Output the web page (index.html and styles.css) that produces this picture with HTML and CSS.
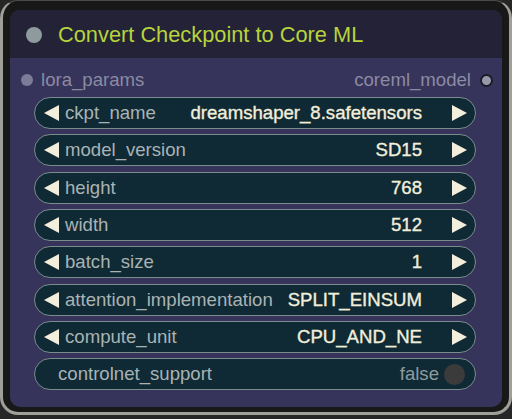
FILE: index.html
```html
<!DOCTYPE html>
<html>
<head>
<meta charset="utf-8">
<link rel="stylesheet" href="styles.css">
</head>
<body>
<div class="frame">
  <div class="node">
    <div class="title">
      <span class="title-dot"></span>
      <span class="title-text">Convert Checkpoint to Core ML</span>
    </div>
    <div class="content">
      <div class="io">
        <div class="io-in"><span class="slot-in"></span><span>lora_params</span></div>
        <div class="io-out"><span>coreml_model</span><span class="slot-out"></span></div>
      </div>
      <div class="widgets">
        <div class="widget">
          <svg class="arrow" viewBox="0 0 15 16"><polygon points="15,0 15,16 0,8"/></svg>
          <span class="label">ckpt_name</span>
          <span class="value">dreamshaper_8.safetensors</span>
          <svg class="arrow right" viewBox="0 0 15 16"><polygon points="0,0 0,16 15,8"/></svg>
        </div>
        <div class="widget">
          <svg class="arrow" viewBox="0 0 15 16"><polygon points="15,0 15,16 0,8"/></svg>
          <span class="label">model_version</span>
          <span class="value">SD15</span>
          <svg class="arrow right" viewBox="0 0 15 16"><polygon points="0,0 0,16 15,8"/></svg>
        </div>
        <div class="widget">
          <svg class="arrow" viewBox="0 0 15 16"><polygon points="15,0 15,16 0,8"/></svg>
          <span class="label">height</span>
          <span class="value">768</span>
          <svg class="arrow right" viewBox="0 0 15 16"><polygon points="0,0 0,16 15,8"/></svg>
        </div>
        <div class="widget">
          <svg class="arrow" viewBox="0 0 15 16"><polygon points="15,0 15,16 0,8"/></svg>
          <span class="label">width</span>
          <span class="value">512</span>
          <svg class="arrow right" viewBox="0 0 15 16"><polygon points="0,0 0,16 15,8"/></svg>
        </div>
        <div class="widget">
          <svg class="arrow" viewBox="0 0 15 16"><polygon points="15,0 15,16 0,8"/></svg>
          <span class="label">batch_size</span>
          <span class="value">1</span>
          <svg class="arrow right" viewBox="0 0 15 16"><polygon points="0,0 0,16 15,8"/></svg>
        </div>
        <div class="widget">
          <svg class="arrow" viewBox="0 0 15 16"><polygon points="15,0 15,16 0,8"/></svg>
          <span class="label">attention_implementation</span>
          <span class="value">SPLIT_EINSUM</span>
          <svg class="arrow right" viewBox="0 0 15 16"><polygon points="0,0 0,16 15,8"/></svg>
        </div>
        <div class="widget">
          <svg class="arrow" viewBox="0 0 15 16"><polygon points="15,0 15,16 0,8"/></svg>
          <span class="label">compute_unit</span>
          <span class="value">CPU_AND_NE</span>
          <svg class="arrow right" viewBox="0 0 15 16"><polygon points="0,0 0,16 15,8"/></svg>
        </div>
        <div class="widget toggle">
          <span class="label">controlnet_support</span>
          <span class="value off">false</span>
          <span class="knob"></span>
        </div>
      </div>
    </div>
  </div>
</div>
</body>
</html>
```

FILE: styles.css
```css
* { box-sizing: border-box; }
html, body {
  margin: 0;
  padding: 0;
  background: #262626;
  width: 512px;
  height: 419px;
  overflow: hidden;
  font-family: "Liberation Sans", Arial, sans-serif;
}
.frame {
  width: 512px;
  height: 415px;
  border: 3px solid #a09f98;
  border-top: 1px solid #4a4a48;
  border-radius: 18px;
  background: #181818;
  padding: 9px 7px 5px 7px;
}
.node {
  width: 492px;
  height: 397px;
  border-radius: 10px;
  overflow: hidden;
  background: #36345a;
  display: flex;
  flex-direction: column;
}
.title {
  height: 48px;
  background: #232236;
  display: flex;
  align-items: center;
  padding-left: 16px;
  padding-top: 1px;
  flex-shrink: 0;
}
.title-dot {
  width: 16px;
  height: 16px;
  border-radius: 50%;
  background: #8e9a9d;
}
.title-text {
  margin-left: 16px;
  color: #b7d43c;
  font-size: 21.8px;
}
.content {
  padding: 5px 26px 0 24px;
}
.io {
  height: 34px;
  display: flex;
  align-items: center;
  justify-content: space-between;
  color: #8b8aa3;
  font-size: 18.6px;
  margin-left: -13px;
  margin-right: -17px;
}
.io-in, .io-out {
  display: flex;
  align-items: center;
}
.slot-in {
  width: 12px;
  height: 12px;
  border-radius: 50%;
  background: #7c7b98;
  margin-right: 8px;
}
.slot-out {
  width: 13px;
  height: 13px;
  border-radius: 50%;
  background: #9898aa;
  border: 2px solid #1c1c28;
  margin-left: 9px;
}
.widgets {
  display: flex;
  flex-direction: column;
  gap: 5.35px;
}
.widget {
  height: 32px;
  border: 1.5px solid #7b8c8e;
  border-radius: 16px;
  background: #0f2a34;
  display: flex;
  align-items: center;
  padding: 0 8px 0 9px;
  font-size: 18.6px;
}
.arrow {
  width: 15px;
  height: 16px;
  fill: #f3eedb;
  flex-shrink: 0;
}
.label {
  color: #a9b3b4;
  margin-left: 6px;
  white-space: nowrap;
}
.value {
  margin-left: auto;
  color: #f3eedb;
  -webkit-text-stroke: 0.35px #f3eedb;
  white-space: nowrap;
}
.arrow.right {
  margin-left: 30px;
}
.toggle {
  padding-left: 23px;
  padding-right: 10px;
}
.toggle .label {
  margin-left: 0;
}
.value.off {
  color: #8d9b9d;
  -webkit-text-stroke: 0;
}
.knob {
  width: 21px;
  height: 21px;
  border-radius: 50%;
  background: #3b3b3b;
  margin-left: 5px;
}
```
